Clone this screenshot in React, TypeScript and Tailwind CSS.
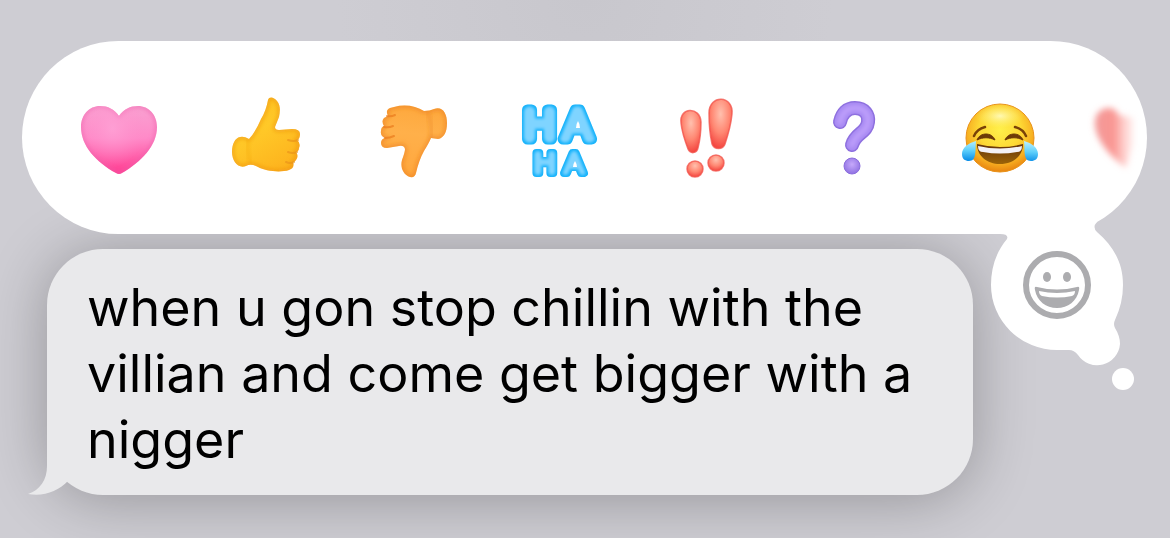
import React from "react";

// every reaction is drawn on the same 80x96 canvas
const Emoji = ({ children }: { children: React.ReactNode }) => (
  <svg className="h-24 w-20 overflow-visible" viewBox="0 0 80 96" fill="none" aria-hidden="true">
    {children}
  </svg>
);

const Heart = () => (
  <Emoji>
    <defs>
      <linearGradient id="heart" x1="0" y1="0" x2="0" y2="1">
        <stop offset=".15" stopColor="#f9a3d2" />
        <stop offset=".5" stopColor="#ff8ac8" />
        <stop offset=".85" stopColor="#ff3f93" />
      </linearGradient>
      <radialGradient id="heartGlow" cx=".42" cy=".4" r=".4">
        <stop offset="0" stopColor="#ffa2d6" stopOpacity=".8" />
        <stop offset="1" stopColor="#ff8fca" stopOpacity="0" />
      </radialGradient>
      <clipPath id="heartClip">
        <path d="M40 26C35 19 29 16 21 16C10 16 2 25 2 37C2 56 17 72 37 83Q40 85 43 83C62 72 78 56 78 37C78 25 70 16 59 16C51 16 45 19 40 26Z" />
      </clipPath>
      <filter id="soft" x="-20%" y="-20%" width="140%" height="140%">
        <feGaussianBlur stdDeviation="2" />
      </filter>
    </defs>
    <g clipPath="url(#heartClip)">
      <rect width="80" height="96" fill="url(#heart)" />
      <path d="M40 26C35 19 29 16 21 16C10 16 2 25 2 37C2 56 17 72 37 83Q40 85 43 83C62 72 78 56 78 37C78 25 70 16 59 16C51 16 45 19 40 26Z" stroke="#ee5faa" strokeOpacity=".6" strokeWidth="4" filter="url(#soft)" />
      <rect width="80" height="96" fill="url(#heartGlow)" />
    </g>
  </Emoji>
);

const ThumbUp = () => (
  <Emoji>
    <defs>
      <linearGradient id="up" x1="0" y1="0" x2=".5" y2="1">
        <stop offset="0" stopColor="#fcbb1e" />
        <stop offset=".5" stopColor="#ffc928" />
        <stop offset="1" stopColor="#fdb01c" />
      </linearGradient>
      <clipPath id="upClip">
        <path d="M42 10C43 6 48 7 51 11C55 16 54 22 53 27L49 37Q49 40 53 40L66 39Q74 39 74 44Q74 49 71 50Q75 53 73 58Q73 61 70 62Q73 66 70 70Q69 72 67 72Q69 78 63 80C54 83 39 81 32 77Q25 73 20 76C12 79 6 71 6 62C6 54 9 48 14 47Q18 46 23 49Q29 43 35 29Q40 21 42 10Z" />
      </clipPath>
    </defs>
    <g clipPath="url(#upClip)">
      <rect width="80" height="96" fill="url(#up)" />
      <path d="M42 10C43 6 48 7 51 11C55 16 54 22 53 27L49 37Q49 40 53 40L66 39Q74 39 74 44Q74 49 71 50Q75 53 73 58Q73 61 70 62Q73 66 70 70Q69 72 67 72Q69 78 63 80C54 83 39 81 32 77Q25 73 20 76C12 79 6 71 6 62C6 54 9 48 14 47Q18 46 23 49Q29 43 35 29Q40 21 42 10Z" stroke="#ec8f12" strokeOpacity=".6" strokeWidth="4" filter="url(#soft)" />
      <path d="M22 49Q20 60 25 74" stroke="#f0a018" strokeOpacity=".6" strokeWidth="2" filter="url(#soft)" />
    </g>
    <path d="M62 50Q68 52 72 50M62 62Q67 64 71 62M60 72Q64 74 68 72" stroke="#e9941a" strokeWidth="2" strokeLinecap="round" opacity=".7" />
  </Emoji>
);

const ThumbDown = () => (
  <Emoji>
    <defs>
      <linearGradient id="down" x1=".5" y1="0" x2=".4" y2="1">
        <stop offset="0" stopColor="#fda436" />
        <stop offset=".45" stopColor="#ffb04a" />
        <stop offset="1" stopColor="#ffa53a" />
      </linearGradient>
      <clipPath id="downClip">
        <path d="M21 17C32 14 43 16 51 21Q57 21 61 19C70 16 74 24 74 33C74 42 71 48 65 49L58 48Q56 53 51 61Q46 70 43 83Q42 88 37 87C30 85 27 77 29 70Q32 62 32 59Q31 55 26 56L14 58Q8 58 8 53Q8 49 12 48Q7 46 8 41Q8 37 11 36Q8 31 11 28L15 26Q12 20 17 18Z" />
      </clipPath>
    </defs>
    <g clipPath="url(#downClip)">
      <rect width="80" height="96" fill="url(#down)" />
      <path d="M21 17C32 14 43 16 51 21Q57 21 61 19C70 16 74 24 74 33C74 42 71 48 65 49L58 48Q56 53 51 61Q46 70 43 83Q42 88 37 87C30 85 27 77 29 70Q32 62 32 59Q31 55 26 56L14 58Q8 58 8 53Q8 49 12 48Q7 46 8 41Q8 37 11 36Q8 31 11 28L15 26Q12 20 17 18Z" stroke="#ea7a1b" strokeOpacity=".6" strokeWidth="4" filter="url(#soft)" />
      <path d="M54 21Q60 34 58 48" stroke="#ea841f" strokeOpacity=".5" strokeWidth="3" filter="url(#soft)" />
    </g>
    <path d="M14 26Q18 27 22 25M11 37Q16 38 20 36M12 48Q17 48 21 46" stroke="#e97a1c" strokeWidth="2" strokeLinecap="round" opacity=".7" />
  </Emoji>
);

const HaHa = () => (
  <Emoji>
    <defs>
      {/* lighter inside, keeps a darker rim like a balloon */}
      <filter id="balloon" x="-20%" y="-20%" width="140%" height="140%" colorInterpolationFilters="sRGB">
        <feMorphology in="SourceAlpha" operator="erode" radius="2" />
        <feGaussianBlur stdDeviation="1.5" result="inner" />
        <feFlood floodColor="#7fd4ff" />
        <feComposite operator="in" in2="inner" result="light" />
        <feMerge>
          <feMergeNode in="SourceGraphic" />
          <feMergeNode in="light" />
        </feMerge>
      </filter>
    </defs>
    <g fontFamily="Liberation Sans, sans-serif" strokeLinejoin="round" stroke="#14b2fb" fill="#14b2fb" filter="url(#balloon)">
      <g fontSize="43" strokeWidth="11">
        <text x="4" y="49">H</text>
        <text x="43" y="49">A</text>
      </g>
      <g fontSize="30" strokeWidth="8">
        <text x="14" y="83">H</text>
        <text x="44" y="83">A</text>
      </g>
    </g>
    <path d="M58 31Q60 34 60 38H56Q56 34 58 31ZM54 54Q54 51 57 51Q60 51 60 54ZM55 71Q57 74 57 77H53Q53 74 55 71Z" fill="#fff" />
  </Emoji>
);

const Exclaim = () => (
  <Emoji>
    <defs>
      <radialGradient id="bang" cx=".5" cy=".3" r=".7">
        <stop offset="0" stopColor="#ffc0ae" />
        <stop offset=".55" stopColor="#ff8873" />
        <stop offset="1" stopColor="#f4453f" />
      </radialGradient>
    </defs>
    <g fill="url(#bang)" stroke="#f2524a" strokeOpacity=".75" strokeWidth="1.5">
      <path d="M14 33C12 17 33 16 34 32C34 41 33 50 31 58C30 64 23 64 21 59C18 51 15 43 14 33Z" />
      <path d="M42 23C42 4 67 5 65 24C64 35 61 45 58 54C56 60 47 60 45 54C43 45 42 34 42 23Z" />
      <circle cx="28" cy="79" r="8" />
      <circle cx="49" cy="73" r="8" />
    </g>
  </Emoji>
);

const Question = () => (
  <Emoji>
    <defs>
      <radialGradient id="dot" cx=".5" cy=".4" r=".6">
        <stop offset="0" stopColor="#c6a9fb" />
        <stop offset="1" stopColor="#8f71e2" />
      </radialGradient>
    </defs>
    <g strokeLinecap="round" strokeLinejoin="round">
      <path d="M26 32C28 23 33 18 41 18C51 18 55 25 54 32C53 43 41 43 38 55" stroke="#8b6ddd" strokeWidth="14" />
      <path d="M26 32C28 23 33 18 41 18C51 18 55 25 54 32C53 43 41 43 38 55" stroke="#a587f1" strokeWidth="11" />
      <path d="M26 32C28 23 33 18 41 18C51 18 55 25 54 32C53 43 41 43 38 55" stroke="#bd9ffb" strokeWidth="6" filter="url(#soft)" />
    </g>
    <circle cx="38" cy="76" r="8" fill="url(#dot)" stroke="#8b6ddd" />
  </Emoji>
);

const Joy = () => (
  <Emoji>
    <defs>
      <radialGradient id="face" cx=".5" cy=".38" r=".62">
        <stop offset="0" stopColor="#fff04a" />
        <stop offset=".5" stopColor="#fdd835" />
        <stop offset=".8" stopColor="#f7ae20" />
        <stop offset="1" stopColor="#e88410" />
      </radialGradient>
      <radialGradient id="shine" cx=".5" cy=".5" r=".5">
        <stop offset="0" stopColor="#fffbc0" stopOpacity=".9" />
        <stop offset="1" stopColor="#fff27a" stopOpacity="0" />
      </radialGradient>
      <linearGradient id="tear" x1=".5" y1="0" x2=".4" y2="1">
        <stop offset="0" stopColor="#b9f0ff" />
        <stop offset=".5" stopColor="#5fd0fb" />
        <stop offset="1" stopColor="#0c8fe8" />
      </linearGradient>
      <linearGradient id="mouth" x1="0" y1="0" x2="0" y2="1">
        <stop offset="0" stopColor="#633208" />
        <stop offset="1" stopColor="#9c6408" />
      </linearGradient>
    </defs>
    <circle cx="39" cy="48" r="34" fill="url(#face)" stroke="#e8921a" />
    <ellipse cx="39" cy="26" rx="24" ry="12" fill="url(#shine)" />
    <path d="M13 46Q16 39 24 37M65 46Q62 39 54 37" stroke="#7a4208" strokeWidth="2.5" strokeLinecap="round" />
    <path d="M16 50C19 42 31 42 34 50C28 47 22 47 16 50ZM44 50C47 42 59 42 62 50C56 47 50 47 44 50Z" fill="#6d3a08" stroke="#6d3a08" strokeLinejoin="round" />
    <path d="M16 54Q39 60 62 54C62 66 52 74 39 74C26 74 16 66 16 54Z" fill="url(#mouth)" />
    <path d="M17 56Q39 61 61 56Q61 62 56 62Q39 65 22 62Q17 62 17 56Z" fill="#f3f1f6" />
    <path d="M15 51C7 53 1 58 1 64C1 69 4 71 8 71C16 71 14 60 15 51ZM63 51C71 53 77 58 77 64C77 69 74 71 70 71C62 71 64 60 63 51Z" fill="url(#tear)" />
  </Emoji>
);

// the next reaction, fading out at the edge of the bar
const NextHeart = () => (
  <Emoji>
    <defs>
      <linearGradient id="fade" x1="0" y1="0" x2="1" y2="0">
        <stop offset="0" stopColor="#f29a99" />
        <stop offset=".5" stopColor="#fa9692" />
        <stop offset="1" stopColor="#ffc9c5" stopOpacity=".3" />
      </linearGradient>
      <filter id="blurry" x="-30%" y="-30%" width="160%" height="160%">
        <feGaussianBlur stdDeviation="3" />
      </filter>
    </defs>
    <path d="M35 18C26 18 20 25 21 35C22 51 38 68 52 78L59 54V28Q50 26 45 25Q41 18 35 18Z" fill="url(#fade)" filter="url(#blurry)" />
  </Emoji>
);

const reactions = [
  { name: "Heart", Icon: Heart },
  { name: "Thumbs up", Icon: ThumbUp },
  { name: "Thumbs down", Icon: ThumbDown },
  { name: "Ha ha", Icon: HaHa },
  { name: "Exclamation", Icon: Exclaim },
  { name: "Question", Icon: Question },
  { name: "Tears of joy", Icon: Joy },
];

const ReactionBar = () => (
  <div className="relative z-10 mr-[23px] ml-[22px]">
    <div className="flex h-[193px] items-center overflow-hidden rounded-full bg-white pl-[23px]">
      {reactions.map(({ name, Icon }) => (
        <button key={name} type="button" aria-label={name} className="flex w-[147px] shrink-0 justify-center">
          <Icon />
        </button>
      ))}
      <button type="button" aria-label="More reactions" className="shrink-0">
        <NextHeart />
      </button>
    </div>
    {/* thought bubble hanging from the bar, holds the emoji picker */}
    <button type="button" aria-label="Choose an emoji" className="absolute top-40 right-0">
      <svg className="h-[200px] w-[167px]" viewBox="980 201 167 200" fill="none" aria-hidden="true">
        <path d="M1000 234Q1009 234 1007 239C996 252 991 268 991 285A66 65 0 0 0 1057 350H1069Q1074 350 1078 355A23 23 0 0 0 1120 344Q1120 336 1115 328Q1113 324 1115 320Q1123 303 1123 285C1123 262 1113 246 1097 232Q1092 227 1097 222L1080 201H1000Z" fill="#fff" />
        <circle cx="1123" cy="379" r="11" fill="#fff" />
        <circle cx="1057" cy="285" r="31" stroke="#acacaf" strokeWidth="6" />
        <ellipse cx="1047" cy="277" rx="4" ry="5" fill="#acacaf" />
        <ellipse cx="1067" cy="277" rx="4" ry="5" fill="#acacaf" />
        <path d="M1037 287Q1057 292 1077 287Q1080 286 1079 290C1077 301 1068 308 1057 308C1046 308 1037 301 1035 290Q1034 286 1037 287Z" fill="#acacaf" />
        <path d="M1039 291Q1057 295 1075 291Q1075 295 1072 296Q1057 299 1042 296Q1039 295 1039 291Z" fill="#fff" />
      </svg>
    </button>
  </div>
);

const Message = () => (
  <div className="relative mt-[15px] mr-[197px] ml-[47px] rounded-[56px] bg-[#e9e9eb] px-10 pt-[26px] pb-[22px] shadow-[0_4px_60px_rgba(0,0,0,0.28)]">
    <svg className="absolute bottom-0 -left-5 h-[60px] w-20" viewBox="27 435 80 60" aria-hidden="true">
      <path d="M47 435V466C47 480 40 490 28 494C44 497 58 491 68 481L104 440V435Z" fill="#e9e9eb" />
    </svg>
    <p className="relative font-['Inter',sans-serif] text-[52px] leading-[66px] text-black">
      when u gon stop chillin with the villian and come get bigger with a nigger
    </p>
  </div>
);

const App = () => {
  return (
    <main className="min-h-screen overflow-hidden bg-[#cecdd3] bg-[radial-gradient(ellipse_at_50%_0,#c8c7cd,#cecdd3_30%)] pt-[41px] pb-11">
      <ReactionBar />
      <Message />
    </main>
  );
};

export default App;
